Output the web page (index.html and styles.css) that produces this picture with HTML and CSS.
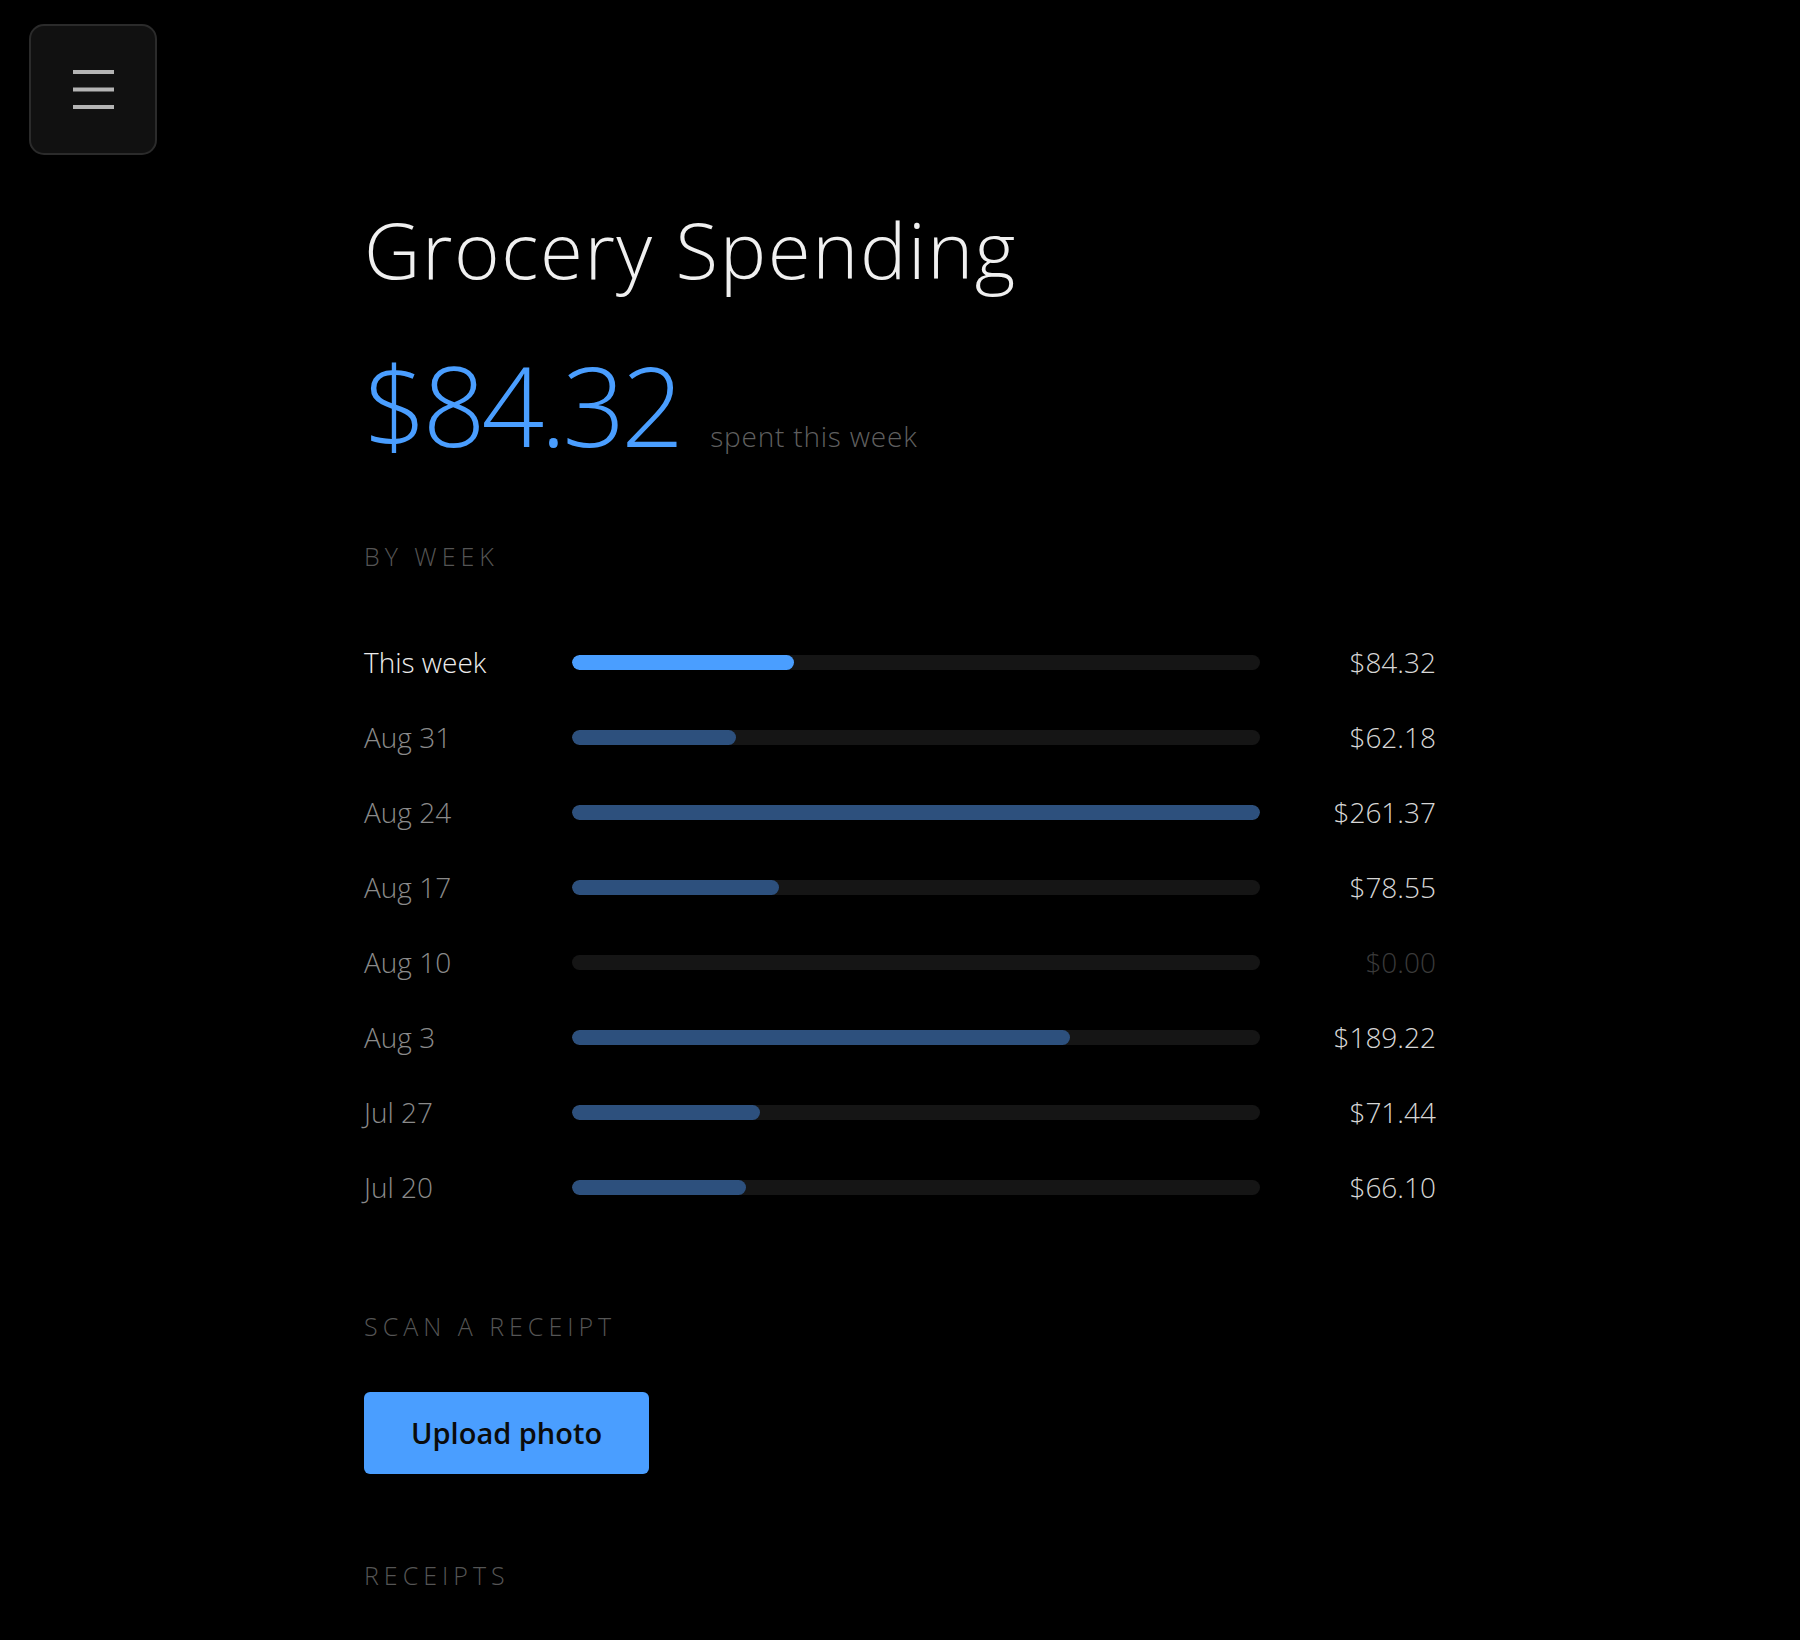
FILE: index.html
```html
<!DOCTYPE html>
<html lang="en">
<head>
    <meta charset="UTF-8">
    <meta name="viewport" content="width=device-width, initial-scale=1.0">
    <title>Grocery Spending</title>
    <link rel="stylesheet" href="styles.css">
</head>
<body>
    <button class="menu-btn" aria-label="Menu">
        <svg width="41" height="39" viewBox="0 0 41 39">
            <rect x="0" y="0" width="41" height="4" fill="#b4b4b4"/>
            <rect x="0" y="17.5" width="41" height="4" fill="#b4b4b4"/>
            <rect x="0" y="35" width="41" height="4" fill="#b4b4b4"/>
        </svg>
    </button>

    <main class="page">
        <h1 class="title">Grocery Spending</h1>

        <div class="total">
            <span class="total-amount">$84.32</span>
            <span class="total-note">spent this week</span>
        </div>

        <h3 class="section-label by-week">BY WEEK</h3>

        <div class="weeks">
            <div class="week current">
                <span class="week-label">This week</span>
                <div class="track"><div class="fill" style="width: 32.26%"></div></div>
                <span class="week-amount">$84.32</span>
            </div>
            <div class="week">
                <span class="week-label">Aug 31</span>
                <div class="track"><div class="fill" style="width: 23.79%"></div></div>
                <span class="week-amount">$62.18</span>
            </div>
            <div class="week">
                <span class="week-label">Aug 24</span>
                <div class="track"><div class="fill" style="width: 100%"></div></div>
                <span class="week-amount">$261.37</span>
            </div>
            <div class="week">
                <span class="week-label">Aug 17</span>
                <div class="track"><div class="fill" style="width: 30.05%"></div></div>
                <span class="week-amount">$78.55</span>
            </div>
            <div class="week empty">
                <span class="week-label">Aug 10</span>
                <div class="track"><div class="fill" style="width: 0%"></div></div>
                <span class="week-amount">$0.00</span>
            </div>
            <div class="week">
                <span class="week-label">Aug 3</span>
                <div class="track"><div class="fill" style="width: 72.4%"></div></div>
                <span class="week-amount">$189.22</span>
            </div>
            <div class="week">
                <span class="week-label">Jul 27</span>
                <div class="track"><div class="fill" style="width: 27.33%"></div></div>
                <span class="week-amount">$71.44</span>
            </div>
            <div class="week">
                <span class="week-label">Jul 20</span>
                <div class="track"><div class="fill" style="width: 25.29%"></div></div>
                <span class="week-amount">$66.10</span>
            </div>
        </div>

        <h3 class="section-label scan">SCAN A RECEIPT</h3>
        <button class="upload-btn">Upload photo</button>

        <h3 class="section-label receipts">RECEIPTS</h3>
    </main>
</body>
</html>
```

FILE: styles.css
```css
* {
    box-sizing: border-box;
    margin: 0;
    padding: 0;
}
body {
    font-family: 'Open Sans', 'Noto Sans', sans-serif;
    font-weight: 300;
    background-color: #000;
    color: #eee;
}
.menu-btn {
    position: fixed;
    top: 24px;
    left: 29px;
    width: 128px;
    height: 131px;
    display: flex;
    justify-content: center;
    align-items: center;
    background-color: #111;
    border: 2px solid #2b2b2b;
    border-radius: 15px;
    cursor: pointer;
}
.page {
    max-width: 1072px;
    margin: 0 auto;
    padding-top: 202px;
    padding-bottom: 40px;
}
.title {
    font-size: 78px;
    line-height: 94px;
    font-weight: 300;
    color: #f0f0f0;
    letter-spacing: 1.6px;
}
.total {
    display: flex;
    align-items: baseline;
    gap: 30px;
    margin-top: 53px;
}
.total-amount {
    font-size: 110px;
    line-height: 110px;
    color: #4a9eff;
    letter-spacing: -4px;
}
.total-note {
    font-size: 28px;
    letter-spacing: 0.8px;
    color: #5f5f5f;
}
.section-label {
    font-size: 25px;
    line-height: 30px;
    font-weight: 300;
    letter-spacing: 5px;
    color: #555;
}
.by-week {
    margin-top: 82px;
}
.weeks {
    margin-top: 54px;
}
.week {
    display: grid;
    grid-template-columns: 208px 1fr 176px;
    align-items: center;
    padding: 16px 0;
    font-size: 28px;
    line-height: 43px;
}
.week-label {
    color: #8a8a8a;
}
.week.current .week-label {
    color: #ececec;
}
.track {
    height: 15px;
    background-color: #151515;
    border-radius: 8px;
    overflow: hidden;
}
.fill {
    height: 100%;
    background-color: #2d507d;
    border-radius: 8px;
}
.week.current .fill {
    background-color: #4a9eff;
}
.week-amount {
    text-align: right;
    color: #d6d6d6;
}
.week.empty .week-amount {
    color: #3a3a3a;
}
.scan {
    margin-top: 86px;
}
.upload-btn {
    display: block;
    margin-top: 51px;
    padding: 21px 47px;
    font-family: 'Open Sans', 'Noto Sans', sans-serif;
    font-size: 29px;
    line-height: 40px;
    font-weight: 600;
    color: #0b0b0b;
    background-color: #4a9eff;
    border: none;
    border-radius: 6px;
    cursor: pointer;
}
.receipts {
    margin-top: 86px;
}
```
